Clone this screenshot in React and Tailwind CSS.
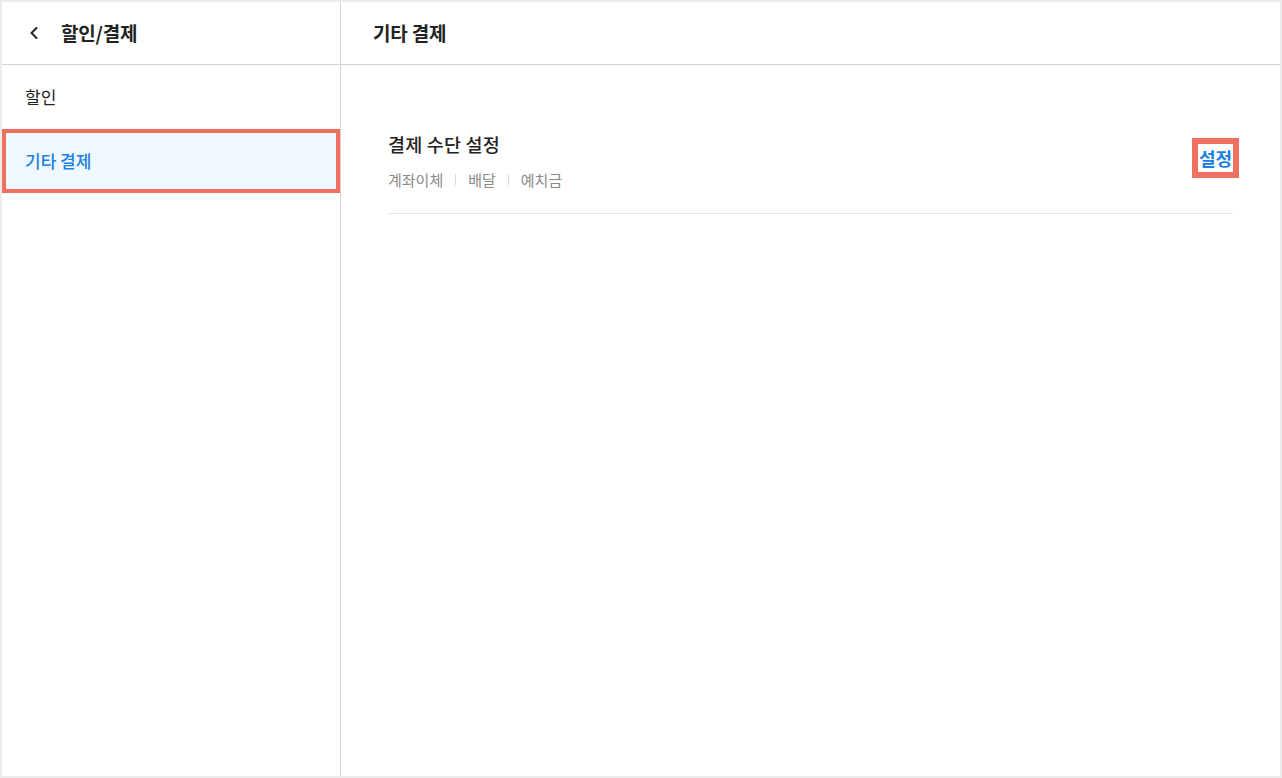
export default function App() {
    const methods = ['계좌이체', '배달', '예치금'];

    return (
        <div
            className="w-[1282px] h-[778px] bg-white border-2 border-[#ebebeb] flex text-[#222]"
            style={{ fontFamily: '"Noto Sans CJK KR", "Noto Sans", sans-serif' }}
        >
            {/* Sidebar */}
            <aside className="w-[339px] shrink-0 border-r border-[#d4d4d4] flex flex-col">
                <div className="h-[63px] shrink-0 border-b border-[#d4d4d4] flex items-center pl-[27px]">
                    <svg width="10" height="12" viewBox="0 0 10 12" fill="none" className="mr-[22px]">
                        <path d="M7.5 1 L2.5 6 L7.5 11" stroke="#222" strokeWidth="2" strokeLinecap="round" strokeLinejoin="round" />
                    </svg>
                    <span className="text-[19px] font-bold tracking-[-0.2px]">할인/결제</span>
                </div>
                <div className="h-[64px] flex items-center pl-[23px] text-[17px]">할인</div>
                <div className="h-[64px] flex items-center pl-[19px] border-4 border-[#f0705f] bg-[#eff7ff] text-[17px] font-medium text-[#1c7fe3]">
                    기타 결제
                </div>
            </aside>

            {/* Main */}
            <main className="flex-1 flex flex-col">
                <div className="h-[63px] shrink-0 border-b border-[#d4d4d4] flex items-center pl-[32px]">
                    <span className="text-[19px] font-bold tracking-[-0.2px]">기타 결제</span>
                </div>
                <div className="px-[47px] pt-[66px]">
                    <div className="flex items-center justify-between border-b border-[#e6e6e6] pb-[23px]">
                        <div className="flex flex-col">
                            <div className="text-[18.5px] font-medium leading-[26px] tracking-[0.2px]">결제 수단 설정</div>
                            <div className="flex items-center mt-[12px] text-[15px] leading-[21px] text-[#8a8a8a]">
                                {methods.map((m, i) => (
                                    <div key={m} className="flex items-center">
                                        {i > 0 && <span className="w-px h-[11px] bg-[#d9d9d9] mx-[12px]" />}
                                        <span>{m}</span>
                                    </div>
                                ))}
                            </div>
                        </div>
                        <button className="border-[6px] border-[#f0705f] px-[1px] text-[18px] font-bold leading-[28px] text-[#1c7fe3] -mr-[6px] mb-[6px]">
                            설정
                        </button>
                    </div>
                </div>
            </main>
        </div>
    );
}
